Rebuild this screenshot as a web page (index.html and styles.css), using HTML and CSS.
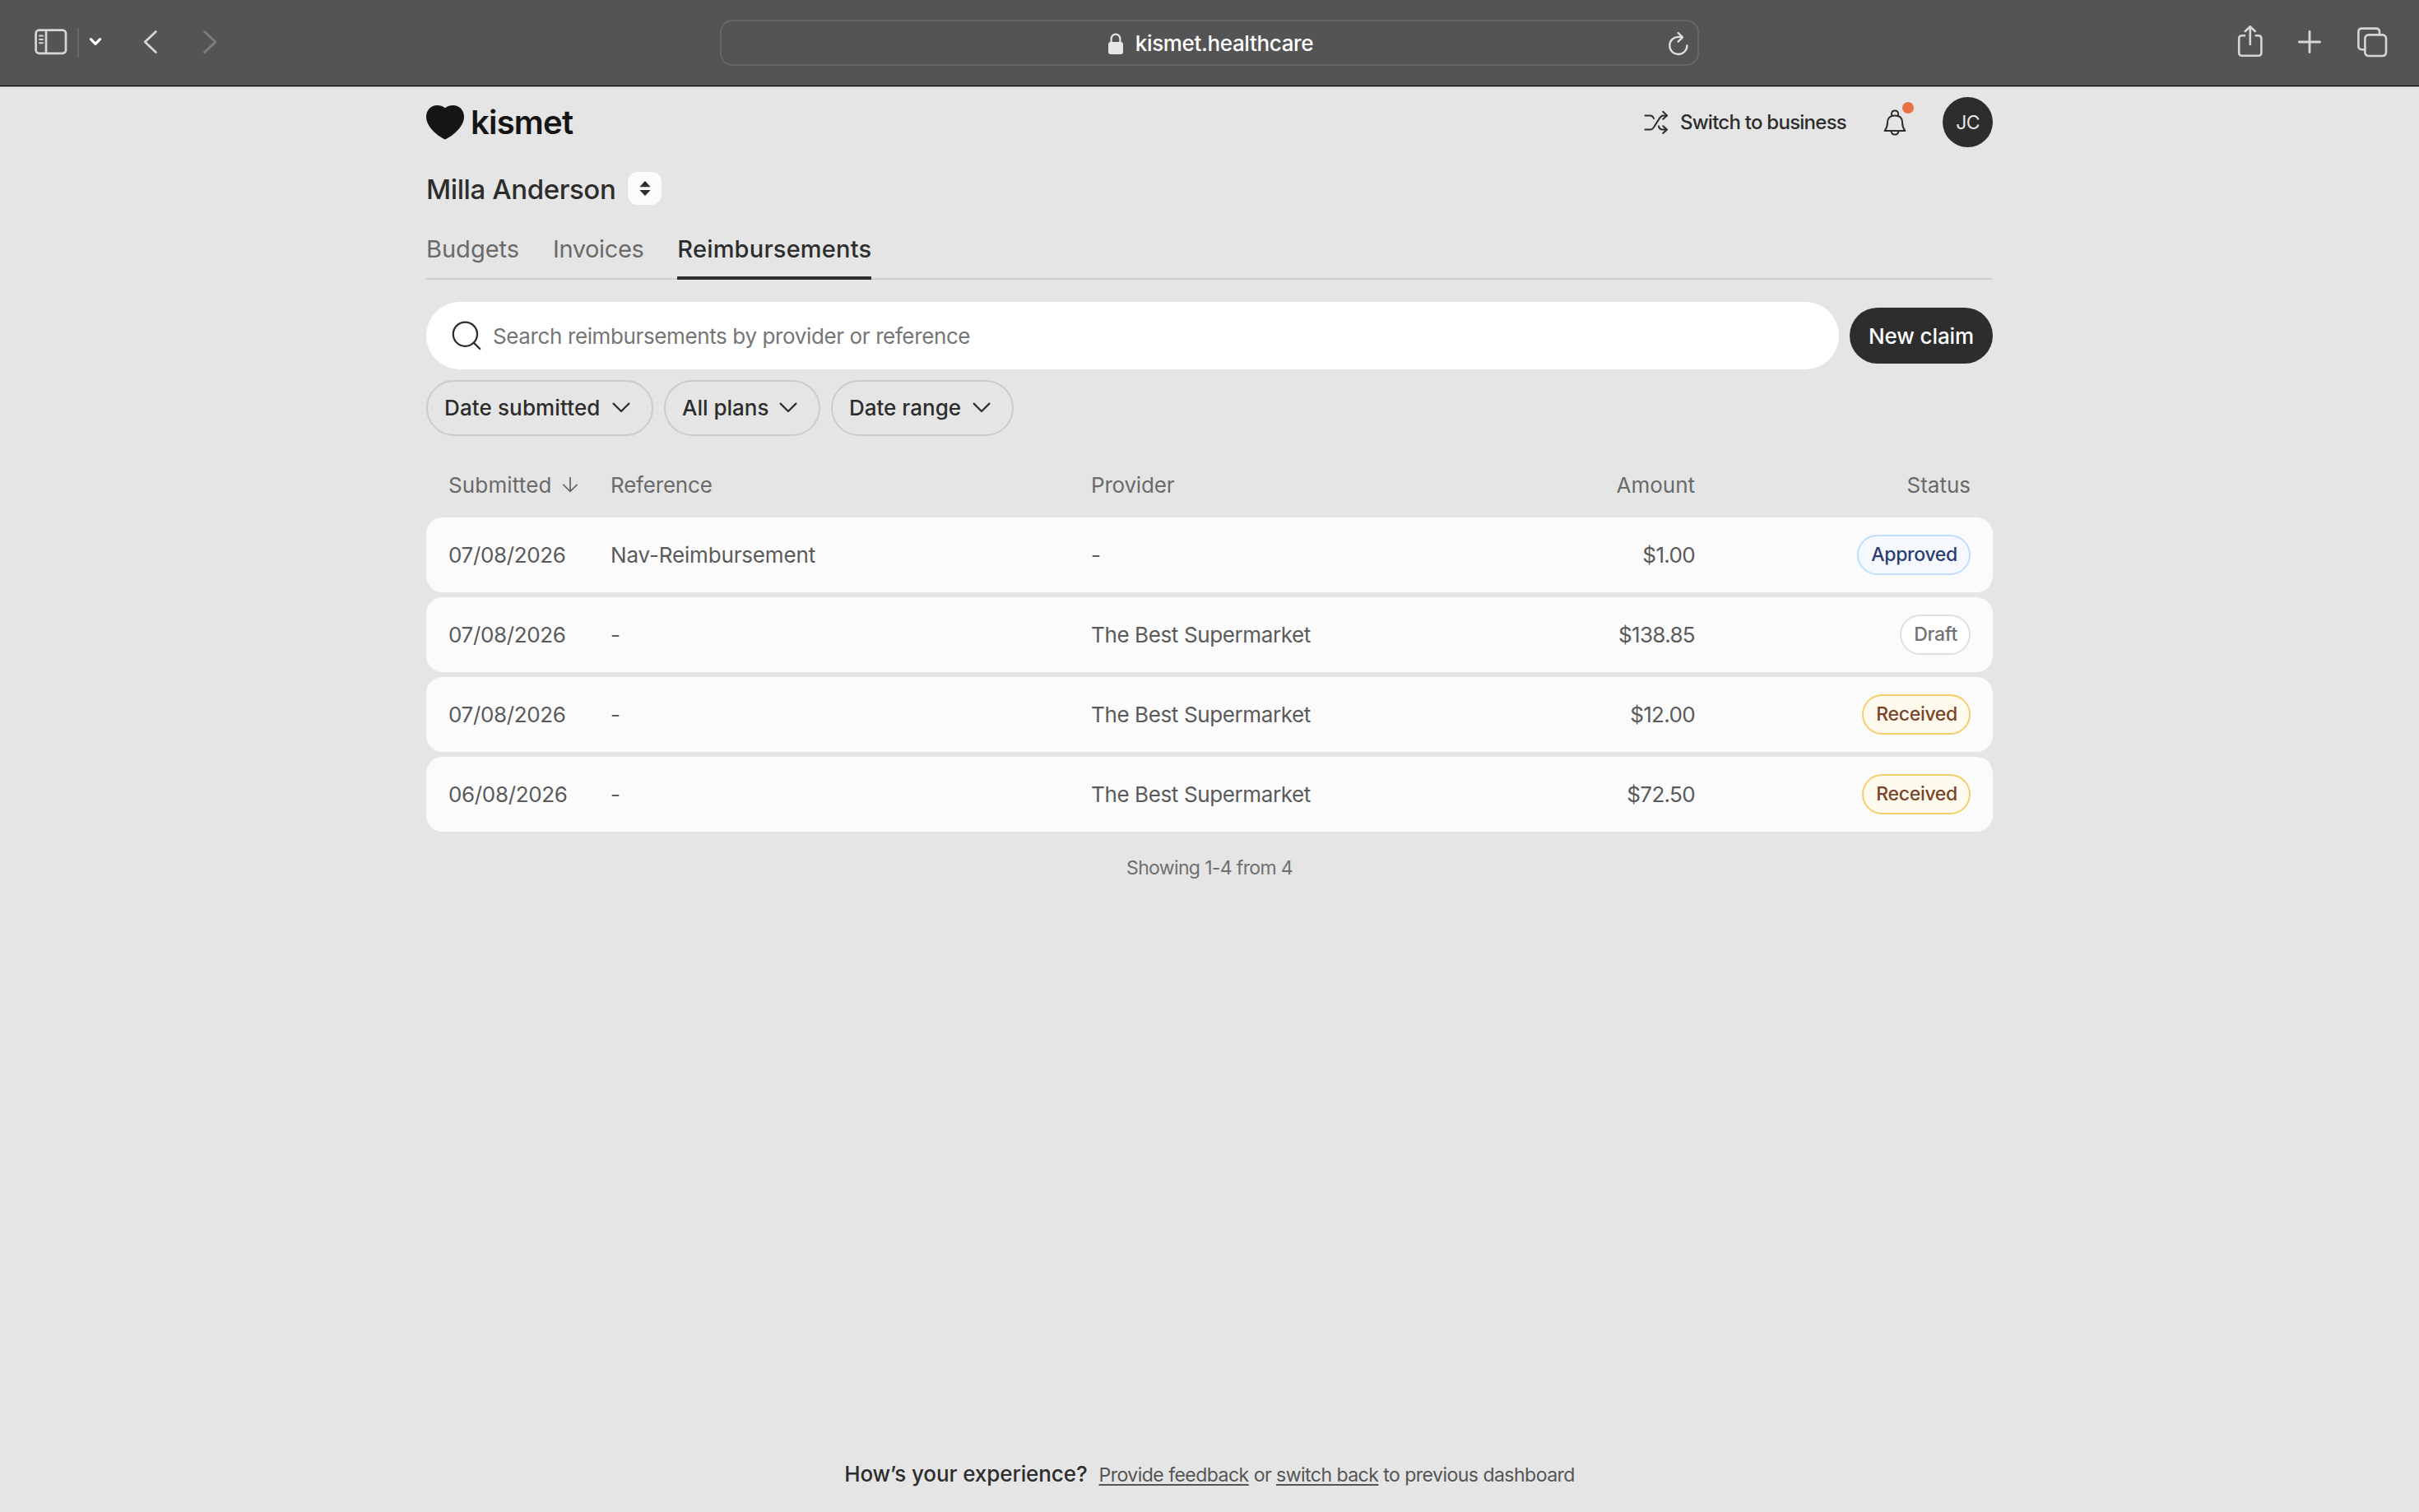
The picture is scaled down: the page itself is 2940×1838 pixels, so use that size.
FILE: index.html
```html
<!DOCTYPE html>
<html lang="en">
<head>
  <meta charset="UTF-8">
  <meta name="viewport" content="width=device-width, initial-scale=1.0">
  <title>Kismet - Reimbursements</title>
  <link rel="stylesheet" href="styles.css">
</head>
<body>

  <!-- Browser toolbar -->
  <div class="toolbar">
    <div class="toolbar-left">
      <svg class="sidebar-icon" width="40" height="32" viewBox="0 0 40 32" fill="none" stroke="#d6d6d6" stroke-width="2.7">
        <rect x="1.6" y="1.6" width="36.4" height="28.2" rx="4"/>
        <path d="M14 2v28"/>
        <path d="M6 8.4h4M6 12.9h4M6 17.3h4" stroke-width="2" stroke-linecap="round"/>
      </svg>
      <span class="toolbar-divider"></span>
      <svg class="menu-icon" width="16" height="12" viewBox="0 0 16 12" fill="none" stroke="#fff" stroke-width="3.2" stroke-linecap="round" stroke-linejoin="round">
        <path d="M2.4 2.6L8 8.4l5.6-5.8"/>
      </svg>
      <svg class="back-icon" width="18" height="30" viewBox="0 0 18 30" fill="none" stroke="#d6d6d6" stroke-width="2.8" stroke-linecap="round" stroke-linejoin="round">
        <path d="M15.4 2.4L2.2 15l13.2 12.6"/>
      </svg>
      <svg width="18" height="30" viewBox="0 0 18 30" fill="none" stroke="#7c7c7c" stroke-width="2.8" stroke-linecap="round" stroke-linejoin="round">
        <path d="M2.6 2.4L15.8 15 2.6 27.6"/>
      </svg>
    </div>
    <div class="address">
      <svg class="lock-icon" width="20" height="26" viewBox="0 0 20 26">
        <rect x="1" y="11" width="18" height="15" rx="3" fill="#e6e6e6"/>
        <path d="M4.6 12V7.4a5.4 5.8 0 0 1 10.8 0V12" fill="none" stroke="#e6e6e6" stroke-width="2.2"/>
      </svg>
      <span class="url">kismet.healthcare</span>
      <svg class="reload-icon" width="26" height="30" viewBox="0 0 26 30" fill="none" stroke="#e0e0e0" stroke-width="2.3" stroke-linecap="round" stroke-linejoin="round">
        <path d="M23.4 17.2A10.6 10.6 0 1 1 12.8 6.8q2.6 0 4.6.4"/>
        <path d="M12.6 2l5.4 5.4-5.4 5.2"/>
      </svg>
    </div>
    <div class="toolbar-right">
      <svg class="share-icon" width="32" height="40" viewBox="0 0 32 40" fill="none" stroke="#d6d6d6" stroke-width="2.6" stroke-linecap="round" stroke-linejoin="round">
        <path d="M10 13.2H6q-3.8 0-3.8 3.8v17q0 3.8 3.8 3.8h19.6q3.8 0 3.8-3.8V17q0-3.8-3.8-3.8h-4" stroke-linecap="butt"/>
        <path d="M15.8 24V2.6M9.800 8l6-5.800 6 5.800"/>
      </svg>
      <svg class="plus-icon" width="30" height="30" viewBox="0 0 30 30" fill="none" stroke="#d6d6d6" stroke-width="2.8" stroke-linecap="round">
        <path d="M15 2.4v25.2M2.4 15h25.2"/>
      </svg>
      <svg width="38" height="38" viewBox="0 0 38 38" fill="none" stroke="#d6d6d6" stroke-width="2.6">
        <rect x="10.4" y="10.4" width="25.6" height="25.6" rx="4.4"/>
        <path d="M10 28.2H6.600q-4.200 0-4.200-4.200V6.800q0-4.200 4.200-4.200h17.200q4.200 0 4.200 4.200v3"/>
      </svg>
    </div>
  </div>

  <div class="container">
    <header>
      <a class="logo" href="#">
        <svg width="46" height="42" viewBox="0 0 46 42" fill="#151515">
          <path d="M23 3.200C26 1 29 0 32.600 0 40 0 46 5.600 46 14 46 25 34 36.500 23 41.500 12 36.500 0 25 0 14 0 5.600 6 0 13.400 0 17 0 20 1 23 3.200z"/>
        </svg>
        <span class="logo-text">kismet</span>
      </a>
      <nav>
        <a class="switch" href="#">
          <svg width="30" height="30" viewBox="0 0 30 30" fill="none" stroke="#2d2d2d" stroke-width="2" stroke-linecap="round" stroke-linejoin="round">
            <path d="M1.400 6.400h6.400q2.800 0 4.200 3.600M1.400 23.600h6.200q2.400 0 4.200-2.600l7.400-11.600q2-3 4.600-3H28"/>
            <path d="M17.800 19.400q1.400 4.200 4.600 4.200H28M23.200 1.800L28 6.400l-4.800 4.400M23.200 19.200l4.800 4.400-4.800 4.400"/>
          </svg>
          <span class="switch-text">Switch to business</span>
        </a>
        <a class="bell" href="#">
          <svg width="28" height="32" viewBox="0 0 28 32" fill="none" stroke="#2d2d2d" stroke-width="2" stroke-linejoin="round">
            <path d="M1.600 26q3.400-4.600 3.400-10C5 10.600 8 7.600 14 7.600s9 3 9 8.400q0 5.400 3.400 10z"/>
            <path d="M10 8.400V5.200Q10 1.400 14 1.400t4 3.800v3.200M9.400 26.400q1 4.200 4.600 4.200t4.600-4.200"/>
          </svg>
          <span class="bell-dot"></span>
        </a>
        <span class="avatar">JC</span>
      </nav>
    </header>

    <div class="member">
      <h1>Milla Anderson</h1>
      <button class="member-btn">
        <svg width="14" height="18" viewBox="0 0 14 18" fill="#2d2d2d">
          <path d="M.4 7.200L6.400.6q.6-.6 1.200 0l6 6.600zM.4 11h13.200L7.600 17.600q-.6.6-1.200 0z"/>
        </svg>
      </button>
    </div>

    <div class="tabs">
      <a class="tab" href="#">Budgets</a>
      <a class="tab tab-invoices" href="#">Invoices</a>
      <a class="tab active" href="#">Reimbursements</a>
    </div>

    <div class="search-row">
      <div class="search">
        <svg width="36" height="36" viewBox="0 0 36 36" fill="none" stroke="#2d2d2d" stroke-width="2.300" stroke-linecap="round">
          <circle cx="16.400" cy="16.200" r="14.600"/>
          <path d="M26.800 26.600l7.400 7.400"/>
        </svg>
        <span class="search-text">Search reimbursements by provider or reference</span>
      </div>
      <button class="new-claim">New claim</button>
    </div>

    <!-- Filters -->
    <div class="filters">
      <button class="filter filter-sort"><span>Date submitted</span><svg width="22" height="13" viewBox="0 0 22 13" fill="none" stroke="#2d2d2d" stroke-width="2.200" stroke-linecap="round" stroke-linejoin="round"><path d="M1.600 1.600L11 11l9.400-9.400"/></svg></button>
      <button class="filter filter-plans"><span>All plans</span><svg width="22" height="13" viewBox="0 0 22 13" fill="none" stroke="#2d2d2d" stroke-width="2.200" stroke-linecap="round" stroke-linejoin="round"><path d="M1.600 1.600L11 11l9.400-9.400"/></svg></button>
      <button class="filter filter-range"><span>Date range</span><svg width="22" height="13" viewBox="0 0 22 13" fill="none" stroke="#2d2d2d" stroke-width="2.200" stroke-linecap="round" stroke-linejoin="round"><path d="M1.600 1.600L11 11l9.400-9.400"/></svg></button>
    </div>

    <!-- Claims -->
    <div class="row row-head">
      <div class="submitted">
        <span>Submitted</span>
        <svg width="20" height="20" viewBox="0 0 20 20" fill="none" stroke="#6a6a6a" stroke-width="1.800" stroke-linecap="round" stroke-linejoin="round">
          <path d="M10 1.600v16.600M1.800 10.400l8.200 8 8.200-8"/>
        </svg>
      </div>
      <div class="head-label">Reference</div>
      <div class="head-label">Provider</div>
      <div class="head-right">Amount</div>
      <div class="status">Status</div>
    </div>
    <div class="rows">
      <div class="row card">
        <div class="date">07/08/2026</div>
        <div class="reference">Nav-Reimbursement</div>
        <div class="provider">-</div>
        <div class="amount">$1.00</div>
        <div class="status"><span class="badge approved">Approved</span></div>
      </div>
      <div class="row card">
        <div class="date">07/08/2026</div>
        <div class="reference">-</div>
        <div class="provider">The Best Supermarket</div>
        <div class="amount">$138.85</div>
        <div class="status"><span class="badge draft">Draft</span></div>
      </div>
      <div class="row card">
        <div class="date">07/08/2026</div>
        <div class="reference">-</div>
        <div class="provider">The Best Supermarket</div>
        <div class="amount">$12.00</div>
        <div class="status"><span class="badge received">Received</span></div>
      </div>
      <div class="row card">
        <div class="date">06/08/2026</div>
        <div class="reference">-</div>
        <div class="provider">The Best Supermarket</div>
        <div class="amount">$72.50</div>
        <div class="status"><span class="badge received">Received</span></div>
      </div>
    </div>
    <p class="showing">Showing 1-4 from 4</p>
  </div>

  <footer>
    <span class="question">How’s your experience?</span>
    <span class="feedback"><a href="#">Provide feedback</a> or <a href="#">switch back</a> to previous dashboard</span>
  </footer>

</body>
</html>
```
FILE: styles.css
```css
* {
  box-sizing: border-box;
}
body {
  font-family: Inter, "Liberation Sans", sans-serif;
  margin: 0;
  min-height: 100vh;
  display: flex;
  flex-direction: column;
  background-color: #e5e5e5;
  color: #2d2d2d;
  font-size: 26px;
}
a {
  color: inherit;
  text-decoration: none;
}
button {
  font: inherit;
  color: inherit;
  border: none;
  padding: 0;
  cursor: pointer;
}
svg {
  display: block;
  flex: none;
}

/* Browser toolbar */
.toolbar {
  display: grid;
  grid-template-columns: 1fr 1190px 1fr;
  align-items: center;
  height: 106px;
  background-color: #545454;
  border-bottom: 1px solid #b4b4b4;
  box-shadow: inset 0 -1px 0 #000;
}
.toolbar-left, .toolbar-right {
  display: flex;
  align-items: center;
  height: 102px;
  margin-bottom: 3px;
}
.toolbar-left {
  padding-left: 42px;
}
.toolbar-right {
  justify-content: flex-end;
  padding-right: 38px;
}
.toolbar-divider {
  width: 2px;
  height: 36px;
  margin: 2px 12px 0 12px;
  background-color: #696969;
}
.back-icon {
  margin: 0 54px 0 50px;
}
.share-icon {
  margin: 0 41px 2px 0;
}
.plus-icon {
  margin-right: 42px;
}
.address {
  position: relative;
  display: flex;
  align-items: center;
  justify-content: center;
  height: 56px;
  margin-bottom: 1px;
  border: 2px solid #676767;
  border-radius: 15px;
}
.lock-icon {
  margin: 2px 14px 0 2px;
}
.url {
  color: #fff;
  font-weight: 500;
  letter-spacing: -0.35px;
}
.reload-icon {
  position: absolute;
  right: 10px;
  top: 12px;
}

.container {
  width: 1904px;
  margin: 0 auto;
  padding-top: 12px;
}
header {
  display: flex;
  justify-content: space-between;
  align-items: center;
  height: 61px;
}
.logo {
  display: flex;
  align-items: center;
  gap: 8px;
  color: #151515;
}
.logo-text {
  font-size: 40px;
  font-weight: 600;
  letter-spacing: -0.8px;
}
nav {
  display: flex;
  align-items: center;
}
.switch {
  display: flex;
  align-items: center;
  gap: 14px;
  font-size: 24px;
  font-weight: 500;
  letter-spacing: -0.75px;
}
.bell {
  position: relative;
  margin: 0 44px 0 45px;
}
.bell-dot {
  position: absolute;
  left: 23px;
  top: -9px;
  width: 14px;
  height: 14px;
  border-radius: 50%;
  background-color: #e97244;
}
.avatar {
  width: 61px;
  height: 61px;
  border-radius: 50%;
  background-color: #2d2d2d;
  color: #e5e5e5;
  font-size: 23px;
  letter-spacing: -0.8px;
  line-height: 62px;
  text-align: center;
}

.member {
  display: flex;
  align-items: center;
  gap: 15px;
  height: 40px;
  margin-top: 30px;
}
.member h1 {
  margin: 0;
  padding-top: 2px;
  font-size: 33px;
  font-weight: 500;
  letter-spacing: -0.4px;
}
.member-btn {
  display: flex;
  align-items: center;
  justify-content: center;
  width: 41px;
  height: 40px;
  border-radius: 12px;
  background-color: #fbfbfb;
}

.tabs {
  display: flex;
  gap: 41px;
  height: 72px;
  margin-top: 19px;
  border-bottom: 2px solid #cfcfcf;
}
.tab {
  height: 72px;
  line-height: 69px;
  font-size: 29px;
  color: #6a6a6a;
}
.tab-invoices {
  letter-spacing: -0.4px;
}
.tab.active {
  color: #2d2d2d;
  font-weight: 500;
  letter-spacing: 0.2px;
  border-bottom: 4px solid #2d2d2d;
}

.search-row {
  display: flex;
  align-items: center;
  gap: 13px;
  margin-top: 27px;
}
.search {
  flex: 1;
  display: flex;
  align-items: center;
  gap: 14px;
  height: 82px;
  padding-left: 31px;
  border-radius: 41px;
  background-color: #fff;
  color: #757575;
}
.search-text {
  padding-top: 1px;
  letter-spacing: -0.38px;
}
.new-claim {
  width: 174px;
  height: 68px;
  border-radius: 34px;
  background-color: #2d2d2d;
  color: #fff;
  font-weight: 500;
  letter-spacing: -0.1px;
}

.filters {
  display: flex;
  gap: 13px;
  margin-top: 13px;
}
.filter {
  display: flex;
  align-items: center;
  justify-content: space-between;
  height: 68px;
  padding: 0 26px 1px 20px;
  border: 2px solid #cbcbcb;
  border-radius: 34px;
  background: none;
  font-weight: 500;
}
.filter-sort {
  width: 276px;
  letter-spacing: 0.13px;
}
.filter-plans {
  width: 190px;
}
.filter-range {
  width: 222px;
}

/* Claims table */
.row {
  display: grid;
  grid-template-columns: 197px 584px 534px 200px 335px;
  align-items: center;
  padding: 0 27px;
}
.row-head {
  height: 76px;
  margin: 21px 0 2px;
  color: #6a6a6a;
}
.submitted {
  display: flex;
  align-items: center;
  gap: 12px;
  letter-spacing: 0.15px;
}
.head-label {
  letter-spacing: -0.2px;
}
.head-right {
  text-align: right;
}
.rows {
  display: flex;
  flex-direction: column;
  gap: 6px;
}
.card {
  height: 91px;
  border-radius: 20px;
  background-color: #fbfbfb;
  color: #5a5a5a;
}
.date {
  letter-spacing: -0.35px;
}
.reference {
  letter-spacing: -0.16px;
}
.provider {
  letter-spacing: -0.38px;
}
.amount {
  text-align: right;
  letter-spacing: -0.65px;
}
.status {
  display: flex;
  justify-content: flex-end;
}
.badge {
  height: 49px;
  padding: 0 14px 0 15px;
  border: 2px solid;
  border-radius: 25px;
  font-size: 23px;
  font-weight: 500;
  line-height: 45px;
  letter-spacing: -0.3px;
}
.approved {
  color: #2b3c70;
  background-color: #f5f9fe;
  border-color: #bfdefc;
}
.draft {
  color: #727272;
  background-color: #fff;
  border-color: #e0e0e0;
}
.received {
  color: #7a4428;
  background-color: #fefaee;
  border-color: #f7cd6b;
}
.showing {
  margin: 28px 0 0;
  line-height: 32px;
  font-size: 23px;
  letter-spacing: -0.65px;
  text-align: center;
  color: #6f6f6f;
}

footer {
  display: flex;
  justify-content: center;
  align-items: baseline;
  gap: 14px;
  margin-top: auto;
  padding-bottom: 31px;
}
.question {
  font-weight: 500;
  letter-spacing: -0.1px;
}
.feedback {
  font-size: 23px;
  letter-spacing: -0.52px;
  color: #555;
}
.feedback a {
  text-decoration: underline;
  text-decoration-thickness: 2px;
  text-underline-offset: 3px;
}
```
